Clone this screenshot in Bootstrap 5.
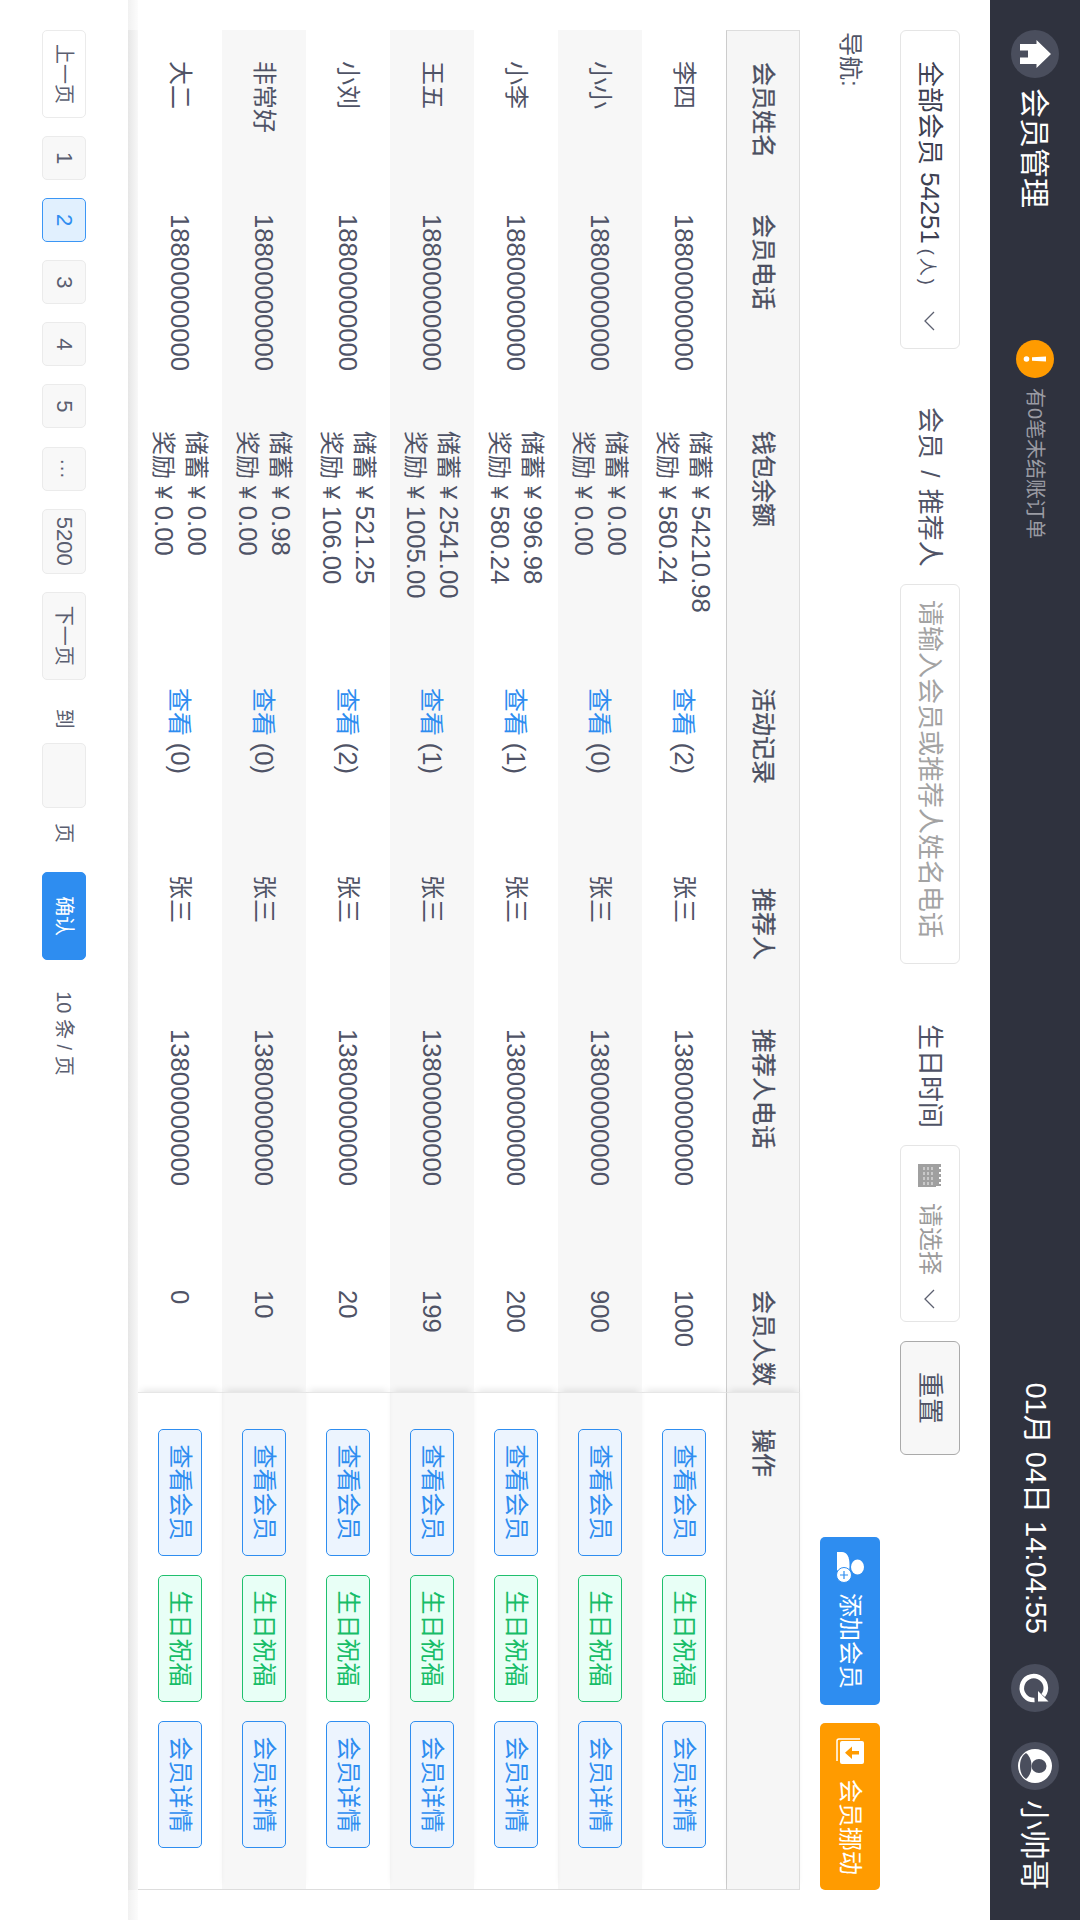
<!DOCTYPE html>
<html lang="zh-CN">
<head>
<meta charset="utf-8">
<title>会员管理</title>
<link href="https://cdn.jsdelivr.net/npm/bootstrap@5.3.0/dist/css/bootstrap.min.css" rel="stylesheet">
<style>
html,body{margin:0;width:1080px;height:1920px;overflow:hidden;background:#fff}
body{font-family:"Liberation Sans","Noto Sans CJK SC",sans-serif;color:#4f5366}
.holder{width:1080px;height:1920px;overflow:hidden}
.stage{width:1920px;height:1080px;transform-origin:0 0;transform:translateX(1080px) rotate(90deg);background:#fff;display:flex;flex-direction:column}
.topbar{height:90px;background:#2f323e;padding:0 30px;flex:none}
.round-ic{width:48px;height:48px;border-radius:50%;background:#4a4e5d;flex:none;display:flex;align-items:center;justify-content:center}
.top-title{font-size:30px;color:#fff;margin-left:10px;width:252px}
.warn-ic{width:38px;height:38px;border-radius:50%;background:#ff9b00;flex:none;display:flex;align-items:center;justify-content:center}
.warn-txt{font-size:20px;color:#9a9ba3;margin-left:10px}
.clock{font-size:29px;color:#fff;margin-right:30px;white-space:nowrap}
.user-ic{margin-left:30px}
.user-name{font-size:30px;color:#fff;margin-left:10px}
.filters{height:60px;margin:30px 30px 0;flex:none}
.fbox{height:60px;border:1px solid #e5e5e5;border-radius:6px;background:#fff;flex:none;font-size:26px}
.f-all{width:319px;padding:0 17px 0 30px;color:#3d4152;white-space:nowrap}
.f-all small{font-size:18px;margin-left:5px;letter-spacing:3px;color:#4f5366}
.f-lab{font-size:26px;flex:none;white-space:nowrap;color:#4f5366}
.f-lab1{margin-left:58px;width:156px;word-spacing:4px}
.f-search{width:380px;margin-left:21px;padding:0 15px;color:#4f5366}
.f-search.form-control{font-size:26px;height:60px;border-color:#e5e5e5;border-radius:6px;box-shadow:none}
.f-search.form-control::placeholder{color:#a3a3a3;opacity:1}
.f-lab2{margin-left:60px;width:103px}
.f-date{width:177px;margin-left:18px;padding:0 16px 0 18px;color:#9b9b9b;font-size:24px}
.f-date span{margin-left:16px;margin-right:14px}
.f-reset.btn{width:114px;height:60px;margin-left:19px;background:#f7f7f7;border:1px solid #aaa;border-radius:6px;color:#4f5366;font-size:26px;padding:0}
.actions{height:60px;margin:20px 30px 20px;flex:none}
.nav-txt{font-size:24px;color:#4f5366;margin-left:2px}
.act-btn.btn{height:60px;border:0;border-radius:5px;color:#fff;font-size:24px;padding:0;display:flex;align-items:center;justify-content:flex-start}
.act-add{width:168px;background:#2e8df0;padding-left:15px!important;gap:10px}
.act-move{width:167px;background:#ff9b00;margin-left:18px;padding-left:15px!important;gap:15px}
.act-add:hover{background:#2e8df0}.act-move:hover{background:#ff9b00}
.tbl-wrap{margin:0 30px;flex:none}
.mem-tbl.table{width:1860px;margin:0;table-layout:fixed;border-collapse:separate;border-spacing:0;color:#4f5366;font-size:24px}
.mem-tbl.table>*>*>*{padding:0 0 0 31px;vertical-align:middle;border:0;box-shadow:none;background:transparent;color:#4f5366;line-height:32px}
.mem-tbl thead th{height:74px;font-weight:400;background:#f6f6f6!important;border-top:1px solid #ddd!important;border-bottom:1px solid #ccc!important;color:#4a4e60!important;-webkit-text-stroke:.3px #4a4e60}
.mem-tbl thead th:first-child{border-left:1px solid #ddd!important}
.mem-tbl tbody td{height:84px}
.mem-tbl tbody tr:nth-child(even) td{background:#f7f7f7!important}
.mem-tbl.table>*>*>.fix-col{padding-left:36px;border-left:1px solid #e6e6e6;box-shadow:-5px 0 7px -3px rgba(0,0,0,.1);border-right:1px solid #ddd}
.mem-tbl.table>*>*>.ref-name{padding-left:18px}
.c1{width:153px}.c2{width:217px}.c3{width:257px}.c4{width:200px}.c5{width:141px}.c6{width:261px}.c7{width:133px}.c8{width:498px}
.num{font-size:25.7px}
.yen{font-size:24px}
.wallet{white-space:nowrap}
.view-link{color:#2e8df0;text-decoration:none}
.op-row{gap:19px}
.op-btn.btn{width:127px;height:44px;font-size:24px;line-height:1;padding:0;border-radius:5px;border:1px solid #2e8df0;background:#ecf4fe;color:#2e8df0}
.op-green.btn{border-color:#1fc06e;background:#e8fff6;color:#17bd68}
.shade{height:10px;flex:none;padding:0 30px;background:linear-gradient(to top,#f1f1f1,#fcfcfc)}
.shade-in{height:10px;background:linear-gradient(to top,#e6e6e6,#f8f8f8)}
.pager{height:128px;padding:0 30px;flex:none;gap:18.1px;font-size:20px}
.pg.btn{height:44px;padding:0;font-size:20px;border:1px solid #ebebeb;background:#f8f8f8;border-radius:5px;color:#5a5e70;flex:none;line-height:1}
.pg-num.btn{font-size:22px}
.pg-w1{width:44px}.pg-w2{width:65px}.pg-w3{width:88px}
.pg-white.btn{background:#fff}
.pg-cur.btn{background:#e1f0fe;border-color:#3b96f5;color:#2e8df0}
.pg-go.btn{background:#2e8df0;border-color:#2e8df0;color:#fff}
.pg-lab{flex:none;white-space:nowrap;color:#5a5e70}
.pg-to{margin-left:11px;margin-right:-4px}
.pg-input{width:65px;height:44px;border:1px solid #ebebeb;background:#f8f8f8;border-radius:5px;flex:none}
.pg-ye{margin-left:-3px;margin-right:11px}
.pg-size{margin-left:13px}
</style>
</head>
<body>
<div class="holder">
<div class="stage">
  <div class="topbar d-flex align-items-center">
    <div class="round-ic">
      <svg width="48" height="48" viewBox="0 0 48 48"><path d="M24 8 38 22.500H34V39H27.500V31H20.500V39H14V22.500H10z" fill="#fff"/></svg>
    </div>
    <div class="top-title">会员管理</div>
    <div class="warn-ic">
      <svg width="38" height="38" viewBox="0 0 38 38"><path d="M16.500 8h5l-.8 14h-3.400z" fill="#fff"/><circle cx="19" cy="27.500" r="2.800" fill="#fff"/></svg>
    </div>
    <div class="warn-txt">有0笔未结账订单</div>
    <div class="ms-auto clock">01月 04日 14:04:55</div>
    <div class="round-ic">
      <svg width="48" height="48" viewBox="0 0 48 48"><path d="M31.500 15.800A12 12 0 1 0 36 24.500" fill="none" stroke="#fff" stroke-width="4.600"/><path d="M37.500 10.500v10.500H27z" fill="#fff"/></svg>
    </div>
    <div class="round-ic user-ic">
      <svg width="48" height="48" viewBox="0 0 48 48"><circle cx="24" cy="24" r="17" fill="#fff"/><ellipse cx="24" cy="20" rx="7" ry="7.500" fill="#4a4e5d"/><path d="M11 33c3.500-4 8-5.500 13-5.500s9.500 1.500 13 5.500c-3 4.500-8 6-13 6s-10-1.500-13-6z" fill="#4a4e5d"/></svg>
    </div>
    <div class="user-name">小帅哥</div>
  </div>

  <div class="filters d-flex align-items-center">
    <div class="fbox f-all d-flex align-items-center justify-content-between">
      <div>全部会员 <span class="num">54251</span><small>(人)</small></div>
      <svg width="20" height="11" viewBox="0 0 20 11" class="flex-shrink-0"><path d="M1 1l9 9 9-9" fill="none" stroke="#5c6070" stroke-width="1.300"/></svg>
    </div>
    <div class="f-lab f-lab1">会员 / 推荐人</div>
    <input class="form-control f-search flex-shrink-0" placeholder="请输入会员或推荐人姓名电话">
    <div class="f-lab f-lab2">生日时间</div>
    <div class="fbox f-date d-flex align-items-center">
      <svg width="23" height="23" viewBox="0 0 23 23" class="flex-shrink-0"><path d="M0 0h3v2h2V0h3v2h2V0h3v2h2V0h3v2h2V0h2v5H0z" fill="#a0a0a0"/><rect y="5" width="23" height="18" fill="#a0a0a0"/><path d="M3 8h3v2H3zm5 0h3v2H8zm5 0h3v2h-3zm5 0h3v2h-3zM3 12h3v2H3zm5 0h3v2H8zm5 0h3v2h-3zm5 0h3v2h-3zM3 16h3v2H3zm5 0h3v2H8zm5 0h3v2h-3zm5 0h3v2h-3z" fill="#c9c9c9"/></svg>
      <span class="text-nowrap">请选择</span>
      <svg width="20" height="11" viewBox="0 0 20 11" class="flex-shrink-0"><path d="M1 1l9 9 9-9" fill="none" stroke="#5c6070" stroke-width="1.300"/></svg>
    </div>
    <button class="btn f-reset" type="button">重置</button>
  </div>

  <div class="actions d-flex align-items-center justify-content-between">
    <div class="nav-txt">导航:</div>
    <div class="d-flex">
      <button class="btn act-btn act-add" type="button">
        <svg width="31" height="28" viewBox="0 0 31 28" class="flex-shrink-0"><ellipse cx="15" cy="6.500" rx="7.500" ry="6.500" fill="#fff"/><path d="M0 27V22C0 17 5 14.500 13 14.500 17 14.500 18.500 15 18.500 15V27z" fill="#fff"/><circle cx="23" cy="20" r="7.500" fill="#fff" stroke="#2e8df0"/><path d="M23 16v8M19 20h8" stroke="#2e8df0" stroke-width="1.200"/></svg>
        <span>添加会员</span>
      </button>
      <button class="btn act-btn act-move" type="button">
        <svg width="26" height="28" viewBox="0 0 26 28" class="flex-shrink-0"><rect x="3" y="0" width="23" height="24" rx="2" fill="#fff"/><path d="M1 4v21a2 2 0 0 0 2 2h20" fill="none" stroke="#fff" stroke-width="1.500"/><path d="M13 5h3.500v7H21l-6.200 7-6.300-7H13z" fill="#ff9b00"/></svg>
        <span>会员挪动</span>
      </button>
    </div>
  </div>

  <div class="tbl-wrap">
    <table class="table mem-tbl">
      <colgroup><col class="c1"><col class="c2"><col class="c3"><col class="c4"><col class="c5"><col class="c6"><col class="c7"><col class="c8"></colgroup>
      <thead>
        <tr><th>会员姓名</th><th>会员电话</th><th>钱包余额</th><th>活动记录</th><th>推荐人</th><th>推荐人电话</th><th>会员人数</th><th class="fix-col">操作</th></tr>
      </thead>
      <tbody>
        <tr><td>李四</td><td class="num">18800000000</td><td class="wallet">储蓄 <span class="yen">¥</span> <span class="num">54210.98</span><br>奖励 <span class="yen">¥</span> <span class="num">580.24</span></td><td><a class="view-link" href="#">查看</a> <span class="num">(2)</span></td><td class="ref-name">张三</td><td class="num">13800000000</td><td class="num">1000</td><td class="fix-col"><div class="d-flex op-row"><button class="btn op-btn" type="button">查看会员</button><button class="btn op-btn op-green" type="button">生日祝福</button><button class="btn op-btn" type="button">会员详情</button></div></td></tr>
        <tr><td>小小</td><td class="num">18800000000</td><td class="wallet">储蓄 <span class="yen">¥</span> <span class="num">0.00</span><br>奖励 <span class="yen">¥</span> <span class="num">0.00</span></td><td><a class="view-link" href="#">查看</a> <span class="num">(0)</span></td><td class="ref-name">张三</td><td class="num">13800000000</td><td class="num">900</td><td class="fix-col"><div class="d-flex op-row"><button class="btn op-btn" type="button">查看会员</button><button class="btn op-btn op-green" type="button">生日祝福</button><button class="btn op-btn" type="button">会员详情</button></div></td></tr>
        <tr><td>小李</td><td class="num">18800000000</td><td class="wallet">储蓄 <span class="yen">¥</span> <span class="num">996.98</span><br>奖励 <span class="yen">¥</span> <span class="num">580.24</span></td><td><a class="view-link" href="#">查看</a> <span class="num">(1)</span></td><td class="ref-name">张三</td><td class="num">13800000000</td><td class="num">200</td><td class="fix-col"><div class="d-flex op-row"><button class="btn op-btn" type="button">查看会员</button><button class="btn op-btn op-green" type="button">生日祝福</button><button class="btn op-btn" type="button">会员详情</button></div></td></tr>
        <tr><td>王五</td><td class="num">18800000000</td><td class="wallet">储蓄 <span class="yen">¥</span> <span class="num">2541.00</span><br>奖励 <span class="yen">¥</span> <span class="num">1005.00</span></td><td><a class="view-link" href="#">查看</a> <span class="num">(1)</span></td><td class="ref-name">张三</td><td class="num">13800000000</td><td class="num">199</td><td class="fix-col"><div class="d-flex op-row"><button class="btn op-btn" type="button">查看会员</button><button class="btn op-btn op-green" type="button">生日祝福</button><button class="btn op-btn" type="button">会员详情</button></div></td></tr>
        <tr><td>小刘</td><td class="num">18800000000</td><td class="wallet">储蓄 <span class="yen">¥</span> <span class="num">521.25</span><br>奖励 <span class="yen">¥</span> <span class="num">106.00</span></td><td><a class="view-link" href="#">查看</a> <span class="num">(2)</span></td><td class="ref-name">张三</td><td class="num">13800000000</td><td class="num">20</td><td class="fix-col"><div class="d-flex op-row"><button class="btn op-btn" type="button">查看会员</button><button class="btn op-btn op-green" type="button">生日祝福</button><button class="btn op-btn" type="button">会员详情</button></div></td></tr>
        <tr><td>非常好</td><td class="num">18800000000</td><td class="wallet">储蓄 <span class="yen">¥</span> <span class="num">0.98</span><br>奖励 <span class="yen">¥</span> <span class="num">0.00</span></td><td><a class="view-link" href="#">查看</a> <span class="num">(0)</span></td><td class="ref-name">张三</td><td class="num">13800000000</td><td class="num">10</td><td class="fix-col"><div class="d-flex op-row"><button class="btn op-btn" type="button">查看会员</button><button class="btn op-btn op-green" type="button">生日祝福</button><button class="btn op-btn" type="button">会员详情</button></div></td></tr>
        <tr><td>大二</td><td class="num">18800000000</td><td class="wallet">储蓄 <span class="yen">¥</span> <span class="num">0.00</span><br>奖励 <span class="yen">¥</span> <span class="num">0.00</span></td><td><a class="view-link" href="#">查看</a> <span class="num">(0)</span></td><td class="ref-name">张三</td><td class="num">13800000000</td><td class="num">0</td><td class="fix-col"><div class="d-flex op-row"><button class="btn op-btn" type="button">查看会员</button><button class="btn op-btn op-green" type="button">生日祝福</button><button class="btn op-btn" type="button">会员详情</button></div></td></tr>
      </tbody>
    </table>
  </div>
  <div class="shade"><div class="shade-in"></div></div>
  <div class="pager d-flex align-items-center">
    <button class="btn pg pg-w3 pg-white" type="button">上一页</button>
    <button class="btn pg pg-num pg-w1" type="button">1</button>
    <button class="btn pg pg-num pg-w1 pg-cur" type="button">2</button>
    <button class="btn pg pg-num pg-w1" type="button">3</button>
    <button class="btn pg pg-num pg-w1" type="button">4</button>
    <button class="btn pg pg-num pg-w1" type="button">5</button>
    <button class="btn pg pg-w1" type="button">···</button>
    <button class="btn pg pg-num pg-w2" type="button">5200</button>
    <button class="btn pg pg-w3" type="button">下一页</button>
    <span class="pg-lab pg-to">到</span>
    <div class="pg-input"></div>
    <span class="pg-lab pg-ye">页</span>
    <button class="btn pg pg-w3 pg-go" type="button">确认</button>
    <span class="pg-lab pg-size">10 条 / 页</span>
  </div>
</div>
</div>
</body>
</html>
